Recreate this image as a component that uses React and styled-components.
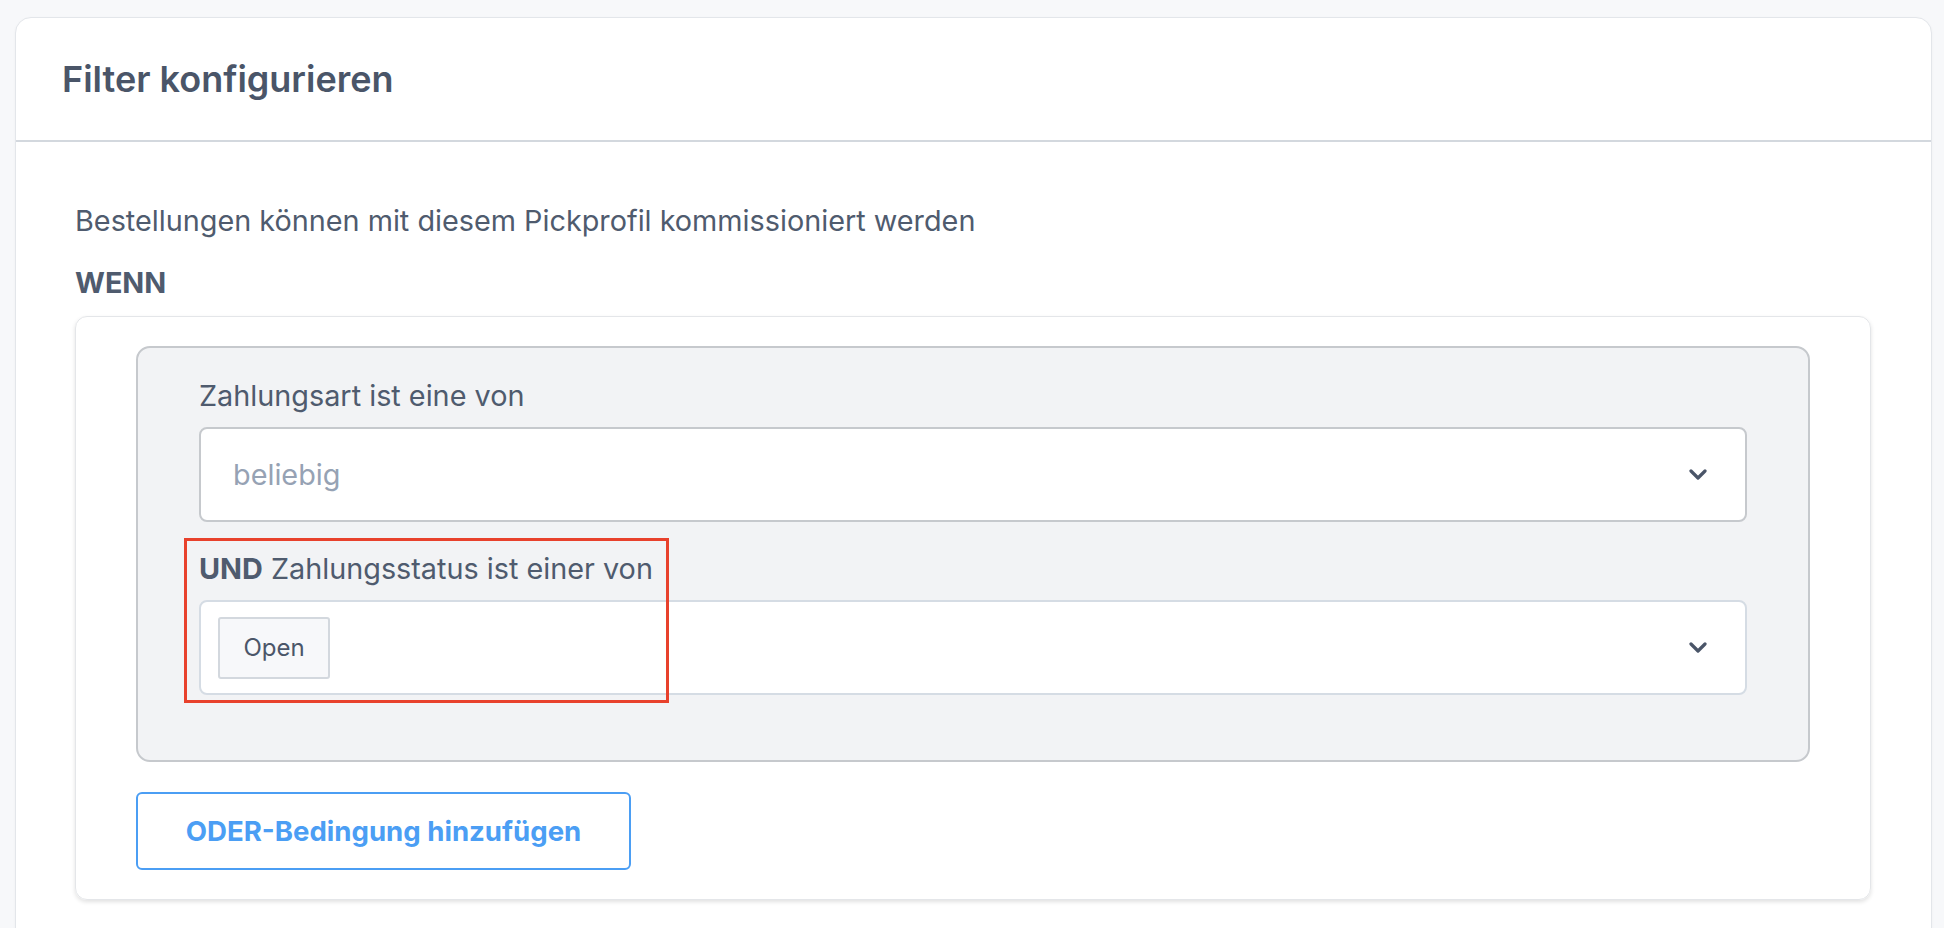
import React from 'react'
import styled, { createGlobalStyle } from 'styled-components'

const Global = createGlobalStyle`
    body {
        margin: 0;
        background: #f7f8fa;
        font-family: Inter, "Noto Sans", sans-serif;
        color: #4b5669;
    }
`;

const Page = styled.div`
    padding: 17px 12px 0 15px;
`;

const Card = styled.section`
    background: #fff;
    border: 1px solid #e3e6ea;
    border-radius: 16px;
    box-shadow: 0 1px 3px rgba(0, 0, 0, 0.04);
`;

const Header = styled.header`
    display: flex;
    align-items: center;
    height: 122px;
    padding: 0 46px;
    border-bottom: 2px solid #d3d8de;

    h2 {
        margin: 0;
        font-size: 36px;
        font-weight: 600;
        color: #4a5568;
    }
`;

const Body = styled.div`
    padding: 59px 60px 60px 59px;
`;

const Text = styled.p`
    margin: 0 0 22px;
    font-size: 28.8px;
    line-height: 40px;
    font-weight: ${p => (p.$bold ? 700 : 400)};
    color: #4f5b6e;
`;

const RuleBox = styled.div`
    margin-top: -9px;
    padding: 29px 60px 29px;
    border: 1px solid #e4e6e9;
    border-radius: 12px;
    box-shadow: 0 2px 4px rgba(0, 0, 0, 0.12);
`;

const Group = styled.div`
    display: flex;
    flex-direction: column;
    gap: 27px;
    padding: 28px 61px 65px;
    background: #f2f3f5;
    border: 2px solid #c6c9cd;
    border-radius: 14px;
`;

const Field = styled.div`
    position: relative;
`;

const Label = styled.div`
    margin-bottom: 11px;
    font-size: 28.8px;
    line-height: 40px;
    color: #4f5b6e;

    b {
        font-weight: 700;
    }
`;

const Select = styled.div`
    display: flex;
    align-items: center;
    height: 95px;
    box-sizing: border-box;
    padding: 0 38px 0 ${p => (p.$tags ? 17 : 32)}px;
    background: #fff;
    border: 2px solid ${p => (p.$tags ? '#d5dce4' : '#c6c9cd')};
    border-radius: 8px;
`;

const Placeholder = styled.span`
    flex: 1;
    font-size: 28.8px;
    color: #96a2b4;
`;

const Tags = styled.div`
    flex: 1;
    display: flex;
    gap: 8px;
`;

const Tag = styled.span`
    display: inline-flex;
    align-items: center;
    justify-content: center;
    width: 112px;
    height: 62px;
    box-sizing: border-box;
    background: #f7f8fa;
    border: 2px solid #d3d8de;
    border-radius: 3px;
    font-size: 24px;
    color: #4b5669;
`;

const Highlight = styled.div`
    position: absolute;
    left: -15px;
    top: -11px;
    width: 485px;
    height: 165px;
    box-sizing: border-box;
    border: 3px solid #e8412c;
    pointer-events: none;
`;

const AddButton = styled.button`
    margin-top: 30px;
    width: 495px;
    height: 78px;
    background: #fff;
    border: 2px solid #4b9ef4;
    border-radius: 6px;
    font-family: Inter, "Noto Sans", sans-serif;
    font-size: 27.6px;
    font-weight: 700;
    color: #4b9ef4;
    cursor: pointer;
`;

const Chevron = () => (
    <svg width="18" height="12" viewBox="0 0 18 12">
        <path d="M2 2l7 7 7-7" fill="none" stroke="#4a5568" strokeWidth="3.2" strokeLinecap="round" strokeLinejoin="round" />
    </svg>
);

const App = () => {
    return (
        <Page>
            <Global />
            <Card>
                <Header>
                    <h2>Filter konfigurieren</h2>
                </Header>
                <Body>
                    <Text>Bestellungen können mit diesem Pickprofil kommissioniert werden</Text>
                    <Text $bold>WENN</Text>
                    <RuleBox>
                        <Group>
                            <Field>
                                <Label>Zahlungsart ist eine von</Label>
                                <Select>
                                    <Placeholder>beliebig</Placeholder>
                                    <Chevron />
                                </Select>
                            </Field>
                            <Field>
                                <Label><b>UND</b> Zahlungsstatus ist einer von</Label>
                                <Select $tags>
                                    <Tags>
                                        <Tag>Open</Tag>
                                    </Tags>
                                    <Chevron />
                                </Select>
                                <Highlight />
                            </Field>
                        </Group>
                        <AddButton>ODER-Bedingung hinzufügen</AddButton>
                    </RuleBox>
                </Body>
            </Card>
        </Page>
    )
}

export default App
